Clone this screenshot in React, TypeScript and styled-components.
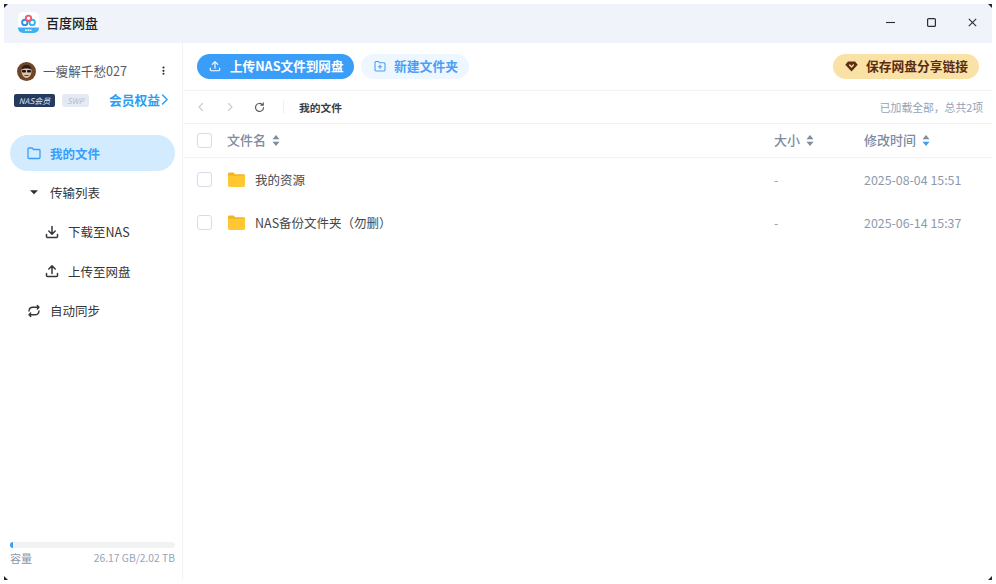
import React from "react";
import styled, { createGlobalStyle } from "styled-components";

const Global = createGlobalStyle`
  html, body { margin: 0; padding: 0; height: 100%; background: #fff; }
  #root { height: 100%; }
  * { box-sizing: border-box; }
  body { font-family: "Noto Sans CJK SC", "Noto Sans", sans-serif; }
`;

const Page = styled.div`
  width: 996px;
  height: 584px;
  padding: 4px;
  background: #fff;
`;
const Win = styled.div`
  position: relative;
  width: 988px;
  height: 576px;
  display: flex;
  flex-direction: column;
  background: #fff;
  overflow: hidden;
`;
const Corner = styled.svg<{ $pos: string }>`
  position: absolute;
  width: 4px;
  height: 4px;
  ${(p) => p.$pos}
`;
const TitleBar = styled.div`
  height: 39px;
  flex: none;
  background: #f0f3f9;
  display: flex;
  align-items: center;
  padding: 0 0 2px 14px;
`;
const AppName = styled.div`
  margin-left: 7px;
  font-size: 13px;
  font-weight: 500;
  color: #1d1f24;
`;
const WinButtons = styled.div`
  margin-left: auto;
  display: flex;
  align-items: center;
  padding-right: 15px;
  gap: 32px;
`;
const Body = styled.div`
  flex: 1;
  display: flex;
  min-height: 0;
`;
const Sidebar = styled.aside`
  width: 179px;
  flex: none;
  border-right: 1px solid #f2f3f5;
  display: flex;
  flex-direction: column;
  padding: 0 7px 0 6px;
`;
const UserRow = styled.div`
  display: flex;
  align-items: center;
  height: 22px;
  margin-top: 17px;
  padding-left: 7px;
`;
const UserName = styled.span`
  margin-left: 7px;
  margin-top: -2px;
  font-size: 12.6px;
  color: #55595f;
`;
const Dots = styled.svg`
  margin-left: auto;
  margin-right: 10px;
  margin-top: -1px;
`;
const BadgeRow = styled.div`
  display: flex;
  align-items: center;
  height: 18px;
  margin-top: 9px;
  padding-left: 4px;
`;
const NasBadge = styled.span`
  width: 41px;
  height: 13px;
  border-radius: 2px;
  background: #263a60;
  color: #dfe6f3;
  font-size: 8px;
  font-style: italic;
  line-height: 13px;
  text-align: center;
`;
const SwpBadge = styled.span`
  width: 27px;
  height: 13px;
  margin-left: 7px;
  border-radius: 3px;
  background: #e4e9f3;
  color: #b4bdce;
  font-size: 8px;
  font-style: italic;
  line-height: 13px;
  text-align: center;
`;
const Perks = styled.span`
  margin-left: auto;
  margin-right: 4px;
  margin-top: -2px;
  display: flex;
  align-items: center;
  color: #2a9df4;
  font-size: 12.75px;
  font-weight: 700;
  svg { margin-left: -2px; }
`;
const Nav = styled.nav`
  margin-top: 26px;
  display: flex;
  flex-direction: column;
`;
const NavItem = styled.div<{ $active?: boolean; $sub?: boolean }>`
  height: ${(p) => (p.$active ? "36px" : "39.5px")};
  margin-bottom: ${(p) => (p.$active ? "1.5px" : "0")};
  display: flex;
  align-items: center;
  gap: 9px;
  padding-left: ${(p) => (p.$sub ? "35px" : "17px")};
  border-radius: 18px;
  background: ${(p) => (p.$active ? "#d3ebff" : "transparent")};
  color: ${(p) => (p.$active ? "#3a9df8" : "#33363b")};
  font-size: 12.5px;
  font-weight: ${(p) => (p.$active ? 700 : 400)};
`;
const Usage = styled.div`
  margin-top: auto;
  padding-bottom: 15px;
`;
const Track = styled.div`
  height: 6px;
  border-radius: 3px;
  background: #f1f2f4;
  overflow: hidden;
`;
const Fill = styled.div`
  height: 100%;
  background: #3a9df8;
`;
const UsageText = styled.div`
  display: flex;
  justify-content: space-between;
  align-items: center;
  margin-top: 2px;
  height: 15px;
  color: #8b97ab;
  font-size: 11px;
`;
const UsageNum = styled.span`
  font-size: 10.3px;
  color: #97a3b8;
`;
const Main = styled.main`
  flex: 1;
  min-width: 0;
  display: flex;
  flex-direction: column;
`;
const Toolbar = styled.div`
  height: 48px;
  flex: none;
  display: flex;
  align-items: center;
  padding: 0 13px 0 14px;
  border-bottom: 1px solid #f2f3f5;
  gap: 7px;
`;
const PillPrimary = styled.button`
  height: 25px;
  width: 157px;
  margin-top: -1px;
  border: none;
  border-radius: 13px;
  background: #3a9df8;
  color: #fff;
  font: 700 12.6px "Noto Sans CJK SC", sans-serif;
  display: flex;
  align-items: center;
  padding: 0 0 2px 12px;
  gap: 9px;
  svg { margin-top: 2px; }
`;
const PillSoft = styled.button`
  height: 25px;
  width: 108px;
  margin-top: -1px;
  border: none;
  border-radius: 13px;
  background: #eef7ff;
  color: #4d9ff4;
  font: 700 12.8px "Noto Sans CJK SC", sans-serif;
  display: flex;
  align-items: center;
  padding: 0 0 2px 13px;
  gap: 8px;
  svg { margin-top: 2px; }
`;
const PillGold = styled.button`
  height: 25px;
  width: 146px;
  margin-top: -1px;
  margin-left: auto;
  border: none;
  border-radius: 13px;
  background: #fae2a6;
  color: #5b2c12;
  font: 700 12.75px "Noto Sans CJK SC", sans-serif;
  display: flex;
  align-items: center;
  padding: 0 0 2px 12px;
  gap: 8px;
  svg { margin-top: 2px; }
`;
const Crumbs = styled.div`
  height: 33px;
  flex: none;
  display: flex;
  align-items: center;
  padding: 0 9px 0 13px;
  border-bottom: 1px solid #f2f3f5;
`;
const CrumbIcons = styled.div`
  display: flex;
  align-items: center;
  gap: 19px;
  width: 88px;
  height: 14px;
  border-right: 1px solid #f0f1f3;
`;
const CrumbText = styled.span`
  margin-left: 15px;
  font-size: 10.75px;
  font-weight: 700;
  color: #3b3e44;
`;
const Loaded = styled.span`
  margin-left: auto;
  font-size: 10.8px;
  color: #95a3b8;
`;
const Row = styled.div<{ $head?: boolean }>`
  flex: none;
  height: ${(p) => (p.$head ? "34px" : "43px")};
  display: flex;
  align-items: center;
  padding-left: 14px;
  ${(p) => p.$head && "border-bottom: 1px solid #f2f3f5; padding-bottom: 1px;"}
`;
const Check = styled.span`
  width: 15px;
  height: 15px;
  flex: none;
  border: 1px solid #d5dde9;
  border-radius: 3px;
  background: #fff;
`;
const HeadCell = styled.div<{ $w: number }>`
  width: ${(p) => p.$w}px;
  flex: none;
  display: flex;
  align-items: center;
  gap: 6px;
  margin-top: -2px;
  color: #7e8ba1;
  font-size: 13px;
  font-weight: 500;
  svg { margin-top: 2px; }
`;
const NameCell = styled.div`
  width: 546px;
  flex: none;
  margin-left: 16px;
  display: flex;
  align-items: center;
  gap: 10px;
  font-size: 12.5px;
  color: #44474d;
`;
const SizeCell = styled.div`
  width: 90px;
  flex: none;
  color: #8c99ad;
  font-size: 12px;
`;
const TimeCell = styled.div`
  flex: none;
  color: #8c99ad;
  font-size: 12.4px;
`;
const HeadName = styled(HeadCell)`
  margin-left: 15px;
`;

const corner = (d: string) => <path d={d} fill="#1f2a38" />;

const Logo = () => (
  <svg width="21" height="21" viewBox="0 0 21 21">
    <rect width="21" height="21" rx="5" fill="#fff" />
    <path d="M0 15.500h21V16a5 5 0 0 1-5 5H5a5 5 0 0 1-5-5z" fill="#3db1f5" />
    <circle cx="6.800" cy="10.400" r="2.700" fill="none" stroke="#2f8df0" strokeWidth="1.900" />
    <circle cx="14.200" cy="10.400" r="2.700" fill="none" stroke="#35b4f2" strokeWidth="1.900" />
    <circle cx="10.500" cy="6.300" r="2.700" fill="none" stroke="#ee5a6f" strokeWidth="1.900" />
    <path d="M7 18.200h7" stroke="#e6f6ff" strokeWidth="1.400" strokeDasharray="1.800 .5" />
  </svg>
);

const Avatar = () => (
  <svg width="19" height="19" viewBox="0 0 19 19">
    <circle cx="9.500" cy="9.500" r="9.500" fill="#6e4527" />
    <path d="M4.500 9c0-3.500 2.200-5 5-5s5 1.500 5 5c0 4-2.500 7-5 7s-5-3-5-7z" fill="#e0c3ac" />
    <path d="M4.500 7.500C5 4 7 3 9.500 3s4.500 1 5 4.500c-2-1.500-8-1.500-10 0z" fill="#2a1d16" />
    <rect x="5" y="8" width="4" height="2.600" rx="1" fill="#15151a" />
    <rect x="10" y="8" width="4" height="2.600" rx="1" fill="#15151a" />
    <path d="M7.500 13.500h4" stroke="#6b3a2a" strokeWidth="1" />
  </svg>
);

const Sort = ({ active }: { active?: boolean }) => (
  <svg width="8" height="11" viewBox="0 0 8 11">
    <path d="M4 0l3.500 4.200H.5z" fill="#7e8ba1" />
    <path d="M4 11L.5 6.800h7z" fill={active ? "#3a9df8" : "#7e8ba1"} />
  </svg>
);

const Folder = () => (
  <svg width="17" height="15" viewBox="0 0 17 15">
    <path d="M0 1.800A1.400 1.400 0 0 1 1.400.4h4.100l1.700 1.800h8.400A1.400 1.400 0 0 1 17 3.600v1H0z" fill="#f5b325" />
    <path d="M0 3.800h17v9.700a1.400 1.400 0 0 1-1.400 1.400H1.400A1.400 1.400 0 0 1 0 13.500z" fill="#ffc833" />
  </svg>
);

const stroke = { fill: "none", stroke: "currentColor", strokeLinecap: "round", strokeLinejoin: "round" } as const;

const UploadIcon = ({ size = 14, w = 1.5 }: { size?: number; w?: number }) => (
  <svg width={size} height={size} viewBox="0 0 14 14" {...stroke} strokeWidth={w}>
    <path d="M7 9.500V2M3.800 5L7 1.800 10.200 5M1.500 9.500v2a1 1 0 0 0 1 1h9a1 1 0 0 0 1-1v-2" />
  </svg>
);
const DownloadIcon = () => (
  <svg width="14" height="14" viewBox="0 0 14 14" {...stroke} strokeWidth={1.5}>
    <path d="M7 1.500V9M3.800 6L7 9.200 10.200 6M1.500 9.500v2a1 1 0 0 0 1 1h9a1 1 0 0 0 1-1v-2" />
  </svg>
);
const SyncIcon = () => (
  <svg width="14" height="14" viewBox="0 0 14 14" {...stroke} strokeWidth={1.4}>
    <path d="M2 7a4 4 0 0 1 4-3.800h6M10.300 1.500L12 3.200 10.300 4.900M12 7a4 4 0 0 1-4 3.800H2M3.700 9.100L2 10.800l1.700 1.700" />
  </svg>
);
const FolderOutline = () => (
  <svg width="14" height="14" viewBox="0 0 14 14" {...stroke} strokeWidth={1.3}>
    <path d="M1 3a1 1 0 0 1 1-1h3.200l1.300 1.500H12a1 1 0 0 1 1 1V11.500a1 1 0 0 1-1 1H2a1 1 0 0 1-1-1z" />
  </svg>
);
const NewFolder = () => (
  <svg width="12" height="12" viewBox="0 0 12 12" {...stroke} strokeWidth={1.1}>
    <path d="M1 2.500a1 1 0 0 1 1-1h2.500l1 1.200H10a1 1 0 0 1 1 1V10a1 1 0 0 1-1 1H2a1 1 0 0 1-1-1zM6 5v3.500M4.300 6.800h3.400" />
  </svg>
);
const Caret = () => (
  <svg width="14" height="14" viewBox="0 0 14 14">
    <path d="M3 5.300h8L7 9.200z" fill="#2b2e33" />
  </svg>
);
const Chevron = ({ dir, color, size = 10 }: { dir: "l" | "r"; color: string; size?: number }) => (
  <svg width={size} height={size} viewBox="0 0 10 10" fill="none" stroke={color} strokeWidth="1.100" strokeLinecap="round" strokeLinejoin="round">
    <path d={dir === "l" ? "M6.500 1.500L3 5l3.500 3.500" : "M3.500 1.500L7 5 3.500 8.500"} />
  </svg>
);
const Refresh = () => (
  <svg width="11" height="11" viewBox="0 0 11 11" fill="none" stroke="#5b6068" strokeWidth="1.200" strokeLinecap="round" strokeLinejoin="round">
    <path d="M9.500 5.500a4 4 0 1 1-1.300-3M9.300 .8v2.400H7" />
  </svg>
);
const Gem = () => (
  <svg width="13" height="11" viewBox="0 0 13 11">
    <path d="M3 .5h7l2.700 3.200L6.500 10.500.3 3.700z" fill="#5b2c12" />
    <path d="M4.300 3.500L6.500 6l2.200-2.500" fill="none" stroke="#fae2a6" strokeWidth="1.200" />
  </svg>
);

export default function App() {
  return (
    <Page>
      <Global />
      <Win>
        <TitleBar>
          <Logo />
          <AppName>百度网盘</AppName>
          <WinButtons>
            <svg width="9" height="9" viewBox="0 0 9 9"><path d="M0 4.500h9" stroke="#2a2d33" strokeWidth="1.100" /></svg>
            <svg width="9" height="9" viewBox="0 0 9 9"><rect x=".6" y=".6" width="7.800" height="7.800" rx="1" fill="none" stroke="#2a2d33" strokeWidth="1.200" /></svg>
            <svg width="9" height="9" viewBox="0 0 9 9"><path d="M.8 .8l7.400 7.400M8.200 .8L.8 8.200" stroke="#2a2d33" strokeWidth="1.100" /></svg>
          </WinButtons>
        </TitleBar>
        <Body>
          <Sidebar>
            <UserRow>
              <Avatar />
              <UserName>一瘦解千愁027</UserName>
              <Dots width="3" height="9" viewBox="0 0 3 9">
                <circle cx="1.500" cy="1.500" r="1.100" fill="#2b2e33" />
                <circle cx="1.500" cy="4.800" r="1.100" fill="#2b2e33" />
                <circle cx="1.500" cy="7.800" r="1" fill="#2b2e33" />
              </Dots>
            </UserRow>
            <BadgeRow>
              <NasBadge>NAS会员</NasBadge>
              <SwpBadge>SWP</SwpBadge>
              <Perks>
                会员权益
                <Chevron dir="r" color="#2a9df4" size={13} />
              </Perks>
            </BadgeRow>
            <Nav>
              <NavItem $active><FolderOutline />我的文件</NavItem>
              <NavItem><Caret />传输列表</NavItem>
              <NavItem $sub><DownloadIcon />下载至NAS</NavItem>
              <NavItem $sub><UploadIcon />上传至网盘</NavItem>
              <NavItem><SyncIcon />自动同步</NavItem>
            </Nav>
            <Usage>
              <Track><Fill style={{ width: `${(26.17 / (2.02 * 1024)) * 100 + 0.4}%` }} /></Track>
              <UsageText>
                <span>容量</span>
                <UsageNum>26.17 GB/2.02 TB</UsageNum>
              </UsageText>
            </Usage>
          </Sidebar>
          <Main>
            <Toolbar>
              <PillPrimary><UploadIcon size={12} w={1.3} />上传NAS文件到网盘</PillPrimary>
              <PillSoft><NewFolder />新建文件夹</PillSoft>
              <PillGold><Gem />保存网盘分享链接</PillGold>
            </Toolbar>
            <Crumbs>
              <CrumbIcons>
                <Chevron dir="l" color="#c3ccd9" />
                <Chevron dir="r" color="#c3ccd9" />
                <Refresh />
              </CrumbIcons>
              <CrumbText>我的文件</CrumbText>
              <Loaded>已加载全部，总共2项</Loaded>
            </Crumbs>
            <Row $head>
              <Check />
              <HeadName $w={547}>文件名<Sort /></HeadName>
              <HeadCell $w={90}>大小<Sort /></HeadCell>
              <HeadCell $w={110}>修改时间<Sort active /></HeadCell>
            </Row>
            <Row>
              <Check />
              <NameCell><Folder />我的资源</NameCell>
              <SizeCell>-</SizeCell>
              <TimeCell>2025-08-04 15:51</TimeCell>
            </Row>
            <Row>
              <Check />
              <NameCell><Folder />NAS备份文件夹（勿删）</NameCell>
              <SizeCell>-</SizeCell>
              <TimeCell>2025-06-14 15:37</TimeCell>
            </Row>
          </Main>
        </Body>
        <Corner $pos="top:0;left:0;" viewBox="0 0 5 5">{corner("M0 0h5L0 5z")}</Corner>
        <Corner $pos="top:0;right:0;" viewBox="0 0 5 5">{corner("M0 0h5v5z")}</Corner>
        <Corner $pos="bottom:0;left:0;" viewBox="0 0 5 5">{corner("M0 0l5 5H0z")}</Corner>
        <Corner $pos="bottom:0;right:0;" viewBox="0 0 5 5">{corner("M5 0v5H0z")}</Corner>
      </Win>
    </Page>
  );
}
